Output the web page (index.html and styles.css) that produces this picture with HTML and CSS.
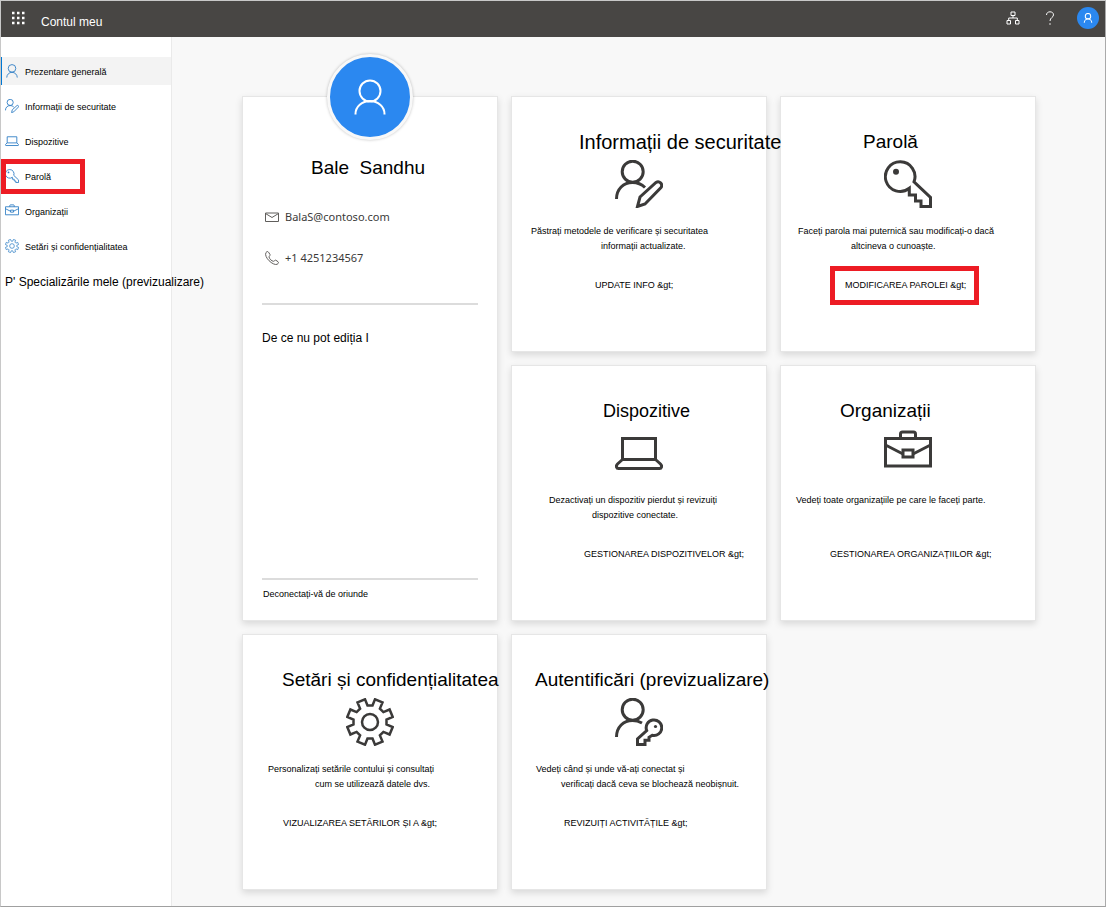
FILE: index.html
```html
<!DOCTYPE html>
<html lang="ro">
<head>
<meta charset="utf-8">
<meta name="viewport" content="width=device-width, initial-scale=1">
<title>Contul meu</title>
<link rel="stylesheet" href="styles.css">
</head>
<body>
<svg class="sprite" aria-hidden="true">
  <symbol id="i-user" viewBox="0 0 48 48"><circle cx="24" cy="15" r="13"/><path d="M6 46.500a18 18 0 0 1 36 0"/></symbol>
  <symbol id="i-user-edit" viewBox="0 0 48 48"><circle cx="17.700" cy="11.700" r="10.500"/><path d="M1.500 39c0-10 7-16.500 16-16.500 5 0 9 1.600 12.500 5"/><path d="M22.500 46.500l2.500-9.500 16-14.500a3.600 3.600 0 0 1 5 5L30 44z"/></symbol>
  <symbol id="i-laptop" viewBox="0 0 48 48"><path d="M7.500 9.500h33v21h-33z"/><path d="M7.500 30.500l-5 4.500c-2 2-1 4.500 1 4.500h41c2 0 3-2.500 1-4.500l-5-4.500"/></symbol>
  <symbol id="i-key" viewBox="0 0 48 48"><path d="M25.300 28.300A14.800 14.800 0 1 1 30 21.900L46.500 37.500v9h-9.500V41h-5.500v-6h-6.200z"/><circle class="solid" cx="12" cy="11.700" r="3"/></symbol>
  <symbol id="i-case" viewBox="0 0 48 48"><path d="M1.500 9.500h45v27.500h-45z"/><path d="M16.500 9.500V5c0-1.500 1-2 2-2h11c1 0 2 .5 2 2v4.500M1.500 16L19 25M46.500 16L29 25"/><path d="M19 21h10v7H19z"/></symbol>
  <symbol id="i-gear" viewBox="-24 -24 48 48"><path stroke-width="2.500" d="M2.500-16.500L5-22.700 12.500-19.600 9.900-13.400 13.400-9.900 19.600-12.500 22.700-5 16.500-2.500V2.500L22.700 5 19.600 12.500 13.400 9.900 9.900 13.400 12.500 19.600 5 22.700 2.500 16.500H-2.500L-5 22.700-12.500 19.600-9.900 13.400-13.400 9.900-19.600 12.500-22.700 5-16.500 2.500V-2.500L-22.700-5-19.600-12.500-13.400-9.900-9.900-13.400-12.500-19.600-5-22.700-2.500-16.500z"/><circle r="8" stroke-width="2.500"/></symbol>
  <symbol id="i-user-key" viewBox="0 0 48 48"><circle cx="17.700" cy="11.700" r="10.500"/><path d="M1.500 39c0-10 7-16.500 16-16.500 3.500 0 6.500.8 9.500 2.500"/><path d="M31.700 32.500a7.800 7.800 0 1 1 5.500 4.800l-3.200 2v3h-4v4.200h-7.500V41z"/><circle class="solid" cx="40.500" cy="28.500" r="1.600"/></symbol>
</svg>

<header class="topbar">
  <button class="icon-button" type="button" aria-label="Lansator de aplicații">
    <svg class="waffle" viewBox="0 0 14 14"><path d="M1 2h12.500M1 7h12.500M1 12h12.500" stroke="#fff" stroke-width="2.500" stroke-dasharray="2.500 2.500"/></svg>
  </button>
  <span class="brand">Contul meu</span>
  <button class="icon-button" type="button" aria-label="Organizații">
    <svg class="tree" viewBox="0 0 14 14"><path d="M5 1h4v3.500H5zM1 9.500h3.500V13H1zM9.500 9.500H13V13H9.500zM7 4.500V7M2.700 9.500V7h8.600v2.500"/></svg>
  </button>
  <button class="icon-button" type="button" aria-label="Ajutor">
    <svg class="help" viewBox="0 0 10 14"><path d="M1.500 4C1.500 2 3 .8 5 .8S8.500 2 8.500 3.900C8.500 6.500 5 6.500 5 10"/><path d="M5 12.200v1.600"/></svg>
  </button>
  <button class="account" type="button" aria-label="Cont"><svg viewBox="0 0 48 48"><use href="#i-user"/></svg></button>
</header>

<div class="shell">
  <nav class="sidebar">
    <a class="nav-item current" href="#"><svg class="nav-icon"><use href="#i-user"/></svg><span>Prezentare generală</span></a>
    <a class="nav-item" href="#"><svg class="nav-icon"><use href="#i-user-edit"/></svg><span>Informații de securitate</span></a>
    <a class="nav-item" href="#"><svg class="nav-icon"><use href="#i-laptop"/></svg><span>Dispozitive</span></a>
    <a class="nav-item marked" href="#"><svg class="nav-icon"><use href="#i-key"/></svg><span>Parolă</span></a>
    <a class="nav-item" href="#"><svg class="nav-icon"><use href="#i-case"/></svg><span>Organizații</span></a>
    <a class="nav-item" href="#"><svg class="nav-icon"><use href="#i-gear"/></svg><span>Setări și confidențialitatea</span></a>
    <a class="nav-item large" href="#"><span>P' Specializările mele (previzualizare)</span></a>
  </nav>

  <main class="board">
    <section class="card profile">
      <div class="avatar"><svg viewBox="0 0 32 36"><circle cx="16" cy="12" r="10.500"/><path d="M1.500 35.500v-.5a14.500 13 0 0 1 29 0v.5"/></svg></div>
      <h1 class="name">Bale&nbsp; Sandhu</h1>
      <p class="contact"><svg viewBox="0 0 14 14"><path d="M.5 3h13v8.500H.5zM.5 3.500L7 7.500l6.500-4"/></svg><span>BalaS@contoso.com</span></p>
      <p class="contact"><svg viewBox="0 0 14 14"><path d="M1 1.500C2 .3 3 .3 3.500 1.200L5 3.500c.5 1-1 1.500-1 2.500C4.500 8 6.500 10 8.500 10.300c1 0 1.200-1.500 2.300-1.100l2.200 1.500c1 .8.300 1.800-.8 2.600C8 15-1.500 6 1 1.500z"/></svg><span>+1 4251234567</span></p>
      <p class="why">De ce nu pot ediția I</p>
      <p class="signout"><a href="#">Deconectați-vă de oriunde</a></p>
    </section>

    <section class="card security">
      <h2>Informații de securitate</h2>
      <svg class="tile-icon"><use href="#i-user-edit"/></svg>
      <p class="text"><span>Păstrați metodele de verificare și securitatea</span><span class="second">informații actualizate.</span></p>
      <a class="action" href="#">UPDATE INFO &amp;gt;</a>
    </section>

    <section class="card password">
      <h2>Parolă</h2>
      <svg class="tile-icon"><use href="#i-key"/></svg>
      <p class="text"><span>Faceți parola mai puternică sau modificați-o dacă</span><span class="second">altcineva o cunoaște.</span></p>
      <a class="action marked" href="#">MODIFICAREA PAROLEI &amp;gt;</a>
    </section>

    <section class="card devices">
      <h2>Dispozitive</h2>
      <svg class="tile-icon"><use href="#i-laptop"/></svg>
      <p class="text"><span>Dezactivați un dispozitiv pierdut și revizuiți</span><span class="second">dispozitive conectate.</span></p>
      <a class="action" href="#">GESTIONAREA DISPOZITIVELOR &amp;gt;</a>
    </section>

    <section class="card orgs">
      <h2>Organizații</h2>
      <svg class="tile-icon"><use href="#i-case"/></svg>
      <p class="text"><span>Vedeți toate organizațiile pe care le faceți parte.</span></p>
      <a class="action" href="#">GESTIONAREA ORGANIZAȚIILOR &amp;gt;</a>
    </section>

    <section class="card settings">
      <h2>Setări și confidențialitatea</h2>
      <svg class="tile-icon"><use href="#i-gear"/></svg>
      <p class="text"><span>Personalizați setările contului și consultați</span><span class="second">cum se utilizează datele dvs.</span></p>
      <a class="action" href="#">VIZUALIZAREA SETĂRILOR ȘI A &amp;gt;</a>
    </section>

    <section class="card signins">
      <h2>Autentificări (previzualizare)</h2>
      <svg class="tile-icon"><use href="#i-user-key"/></svg>
      <p class="text"><span>Vedeți când și unde vă-ați conectat și</span><span class="second">verificați dacă ceva se blochează neobișnuit.</span></p>
      <a class="action" href="#">REVIZUIȚI ACTIVITĂȚILE &amp;gt;</a>
    </section>
  </main>
</div>
</body>
</html>
```
FILE: styles.css
```css
*, *::after { box-sizing: border-box; }

body {
  margin: 0;
  min-height: 100vh;
  display: flex;
  flex-direction: column;
  border: 1px solid #c8c8c8;
  border-right-color: #aaa;
  border-bottom-color: #a0a0a0;
  background: #f8f8f8;
  color: #000;
  font: 9px/15px "Liberation Sans", Arial, sans-serif;
}

h1, h2, p { margin: 0; font-weight: 400; }
a { color: inherit; text-decoration: none; }
svg { fill: none; stroke: currentColor; display: block; flex: none; }
.solid { fill: currentColor; stroke: none; }
.sprite { position: absolute; width: 0; height: 0; }

/* Top bar */
.topbar {
  display: flex;
  align-items: center;
  height: 36px;
  padding: 0 6px 2px 10px;
  background: #484644;
  color: #fff;
}
.icon-button, .account {
  display: flex;
  align-items: center;
  justify-content: center;
  padding: 0;
  border: 0;
  background: none;
  color: #fff;
}
.waffle { width: 14px; height: 14px; }
.brand { flex: 1; padding: 8px 0 0 16px; font-size: 12px; }
.tree { width: 14px; height: 14px; }
.help { width: 10px; height: 14px; margin: 0 22px 0 25px; }
.account { width: 22px; height: 22px; border-radius: 50%; background: #2b88f0; }
.account svg { width: 10px; height: 10px; stroke-width: 5; }

/* Sidebar */
.shell { flex: 1; display: flex; }
.sidebar {
  position: relative;
  z-index: 1;
  flex: none;
  width: 171px;
  padding-top: 20px;
  display: flex;
  flex-direction: column;
  gap: 7px;
  background: #fff;
  border-right: 1px solid #eaeaea;
}
.nav-item {
  display: flex;
  align-items: center;
  gap: 6px;
  height: 28px;
  padding-left: 4px;
  white-space: nowrap;
}
.nav-item span { padding-top: 3px; }
.nav-icon { width: 14px; height: 14px; color: #2b7cc4; stroke-width: 3; }
.current { background: #f3f3f3; box-shadow: inset 1px 0 #0078d4; }
.large { font-size: 12px; }

/* Red callout frame laid over an item */
.marked { position: relative; }
.marked::after {
  content: "";
  position: absolute;
  border: 5px solid #ed1c24;
  pointer-events: none;
}
.nav-item.marked::after { left: 0; top: -3px; width: 84px; height: 35px; }
.action.marked::after { inset: -12px -13px -12px -15px; }

/* Cards */
.board {
  flex: 1;
  min-width: 0;
  padding: 59px 69px 16px 70px;
  display: grid;
  grid-template-columns: repeat(3, minmax(0, 1fr));
  grid-auto-rows: minmax(256px, auto);
  align-content: start;
  gap: 13px;
}
.card {
  display: flex;
  flex-direction: column;
  align-items: flex-start;
  padding-top: 33px;
  background: #fff;
  border: 1px solid #e6e6e6;
  box-shadow: 0 3px 7px rgba(0, 0, 0, .13);
  white-space: nowrap;
}
.card h2 {
  position: relative;
  margin-left: var(--title);
  font-size: 19px;
  line-height: 24px;
}
.tile-icon {
  width: 48px;
  height: 48px;
  margin: 6px 0 16px;
  align-self: center;
  color: #3b3a39;
  stroke-width: 3;
}
.text { min-height: 30px; padding-left: var(--text); }
.text span { display: block; }
.text .second { padding-left: var(--second); }
.action { margin: 24px 0 0 var(--action); line-height: 15px; }

.security { --title: 67px; --text: 19px; --second: 70px; --action: 83px; }
.password { --title: 82px; --text: 17px; --second: 53px; --action: 64px; }
.devices  { --title: 91px; --text: 37px; --second: 43px; --action: 72px; }
.orgs     { --title: 59px; --text: 15px; --second: 0px;  --action: 49px; }
.settings { --title: 39px; --text: 25px; --second: 47px; --action: 40px; }
.signins  { --title: 23px; --text: 24px; --second: 25px; --action: 52px; }
.security h2 { font-size: 20px; }
.devices h2 { font-size: 18px; }

/* Profile card */
.profile {
  position: relative;
  grid-row: span 2;
  align-items: stretch;
  padding: 59px 19px 18px;
}
.avatar {
  position: absolute;
  top: -43px;
  left: 50%;
  width: 86px;
  height: 86px;
  margin-left: -43px;
  display: flex;
  align-items: center;
  justify-content: center;
  border: 3px solid #f8f8f8;
  border-radius: 50%;
  background: #2b88f0;
  box-shadow: 0 0 3px rgba(0, 0, 0, .25);
  color: #fff;
}
.avatar svg { width: 32px; height: 36px; stroke-width: 2; }
.name { padding-right: 4px; font-size: 19px; line-height: 24px; text-align: center; margin-bottom: 26px; }
.contact {
  display: flex;
  align-items: center;
  gap: 6px;
  height: 21px;
  margin-bottom: 20px;
  padding-left: 3px;
  color: #3b3a39;
  font-family: "Noto Sans", sans-serif;
  font-size: 11px;
}
.contact svg { width: 14px; height: 14px; color: #605e5c; }
.why {
  flex: 1;
  margin-top: 15px;
  padding-top: 26px;
  border-top: 2px solid #dcdcdc;
  font-size: 12px;
}
.signout { padding: 7px 1px 0; border-top: 2px solid #dcdcdc; }
```
